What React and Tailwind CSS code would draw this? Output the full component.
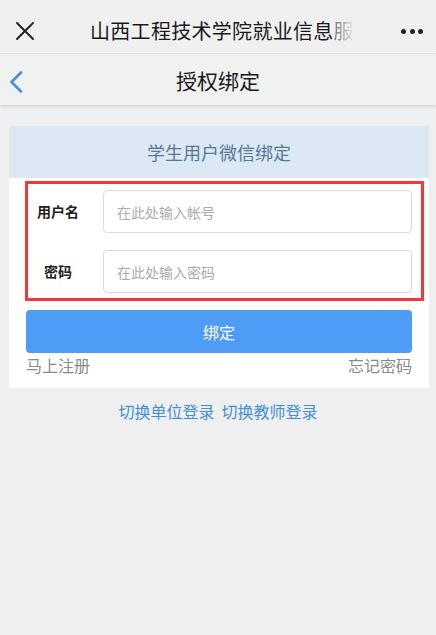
import React from "react";

export default function App() {
  const font = { fontFamily: '"Noto Sans CJK SC", "Noto Sans", sans-serif' };
  return (
    <div
      className="w-full min-h-[635px] bg-[#efefef] font-['Noto_Sans_CJK_SC','Noto_Sans',sans-serif]"
      style={font}
    >
      {/* Top bar */}
      <div className="h-[54px] pt-[9px] flex items-center bg-[#f0f0f0] border-b border-[#e4e4e4]">
        <div className="w-[90px] pl-[16px] flex items-center">
          <svg width="18" height="18" viewBox="0 0 18 18">
            <path d="M1 1 L17 17 M17 1 L1 17" stroke="#222" strokeWidth="1.9" strokeLinecap="round" />
          </svg>
        </div>
        <div className="w-[270px] flex whitespace-nowrap text-[20px] leading-[26px] text-[#1a1a1a] tracking-[0.3px]">
          <span>山西工程技术学院就业信息</span>
          <span className="bg-gradient-to-r from-[#777] to-[#e8e8e8] bg-clip-text text-transparent">服</span>
        </div>
        <div className="flex-1" />
        <div className="pr-[13px] flex items-center gap-[3.5px]">
          <span className="block w-[5px] h-[5px] rounded-full bg-[#222]" />
          <span className="block w-[5px] h-[5px] rounded-full bg-[#222]" />
          <span className="block w-[5px] h-[5px] rounded-full bg-[#222]" />
        </div>
      </div>

      {/* Second bar */}
      <div className="relative h-[51px] flex items-center justify-center bg-[#f1f1f1] shadow-[0_2px_3px_rgba(0,0,0,0.10)]">
        <div className="absolute left-[9px] top-[17px]">
          <svg width="14" height="22" viewBox="0 0 14 22">
            <path d="M12 1.5 L2.5 11 L12 20.5" stroke="#4a90e2" strokeWidth="2.6" fill="none" strokeLinecap="round" strokeLinejoin="round" />
          </svg>
        </div>
        <div className="text-[21px] leading-[28px] text-[#1a1a1a]">授权绑定</div>
      </div>

      {/* Card */}
      <div className="pt-[21px]">
        <div className="ml-[9px] mr-[7px] bg-white">
          <div className="h-[52px] bg-[#dce9f5] flex items-center justify-center text-[18px] text-[#557a94]">
            学生用户微信绑定
          </div>
          <div className="pt-[3px]">
            <div className="ml-[16px] mr-[5px] border-[3px] border-[#f43838] pt-[6px] pb-[5px] pr-[9px]">
              <div className="flex items-center h-[43px]">
                <div className="w-[60px] text-center text-[14px] font-bold text-[#222]">用户名</div>
                <input
                  className="ml-[15px] flex-1 h-[43px] rounded-[4px] border border-[#dcdcdc] px-[13px] text-[14px] outline-none placeholder:text-[#aaaaaa]"
                  placeholder="在此处输入帐号"
                  style={font}
                />
              </div>
              <div className="flex items-center h-[43px] mt-[17px]">
                <div className="w-[60px] text-center text-[14px] font-bold text-[#222]">密码</div>
                <input
                  className="ml-[15px] flex-1 h-[43px] rounded-[4px] border border-[#dcdcdc] px-[13px] text-[14px] outline-none placeholder:text-[#aaaaaa]"
                  placeholder="在此处输入密码"
                  style={font}
                />
              </div>
            </div>
            <div className="mx-[17px] mt-[9px]">
              <div className="h-[43px] rounded-[4px] bg-[#4f9cf6] flex items-center justify-center text-[16px] text-white">
                绑定
              </div>
              <div className="flex justify-between text-[16px] leading-[22px] text-[#8a8a8a] pt-[1px] pb-[12px]">
                <span>马上注册</span>
                <span>忘记密码</span>
              </div>
            </div>
          </div>
        </div>
        <div className="mt-[12px] flex justify-center gap-[7px] text-[16px] leading-[22px] text-[#3f8fe0]">
          <span>切换单位登录</span>
          <span>切换教师登录</span>
        </div>
      </div>
    </div>
  );
}
